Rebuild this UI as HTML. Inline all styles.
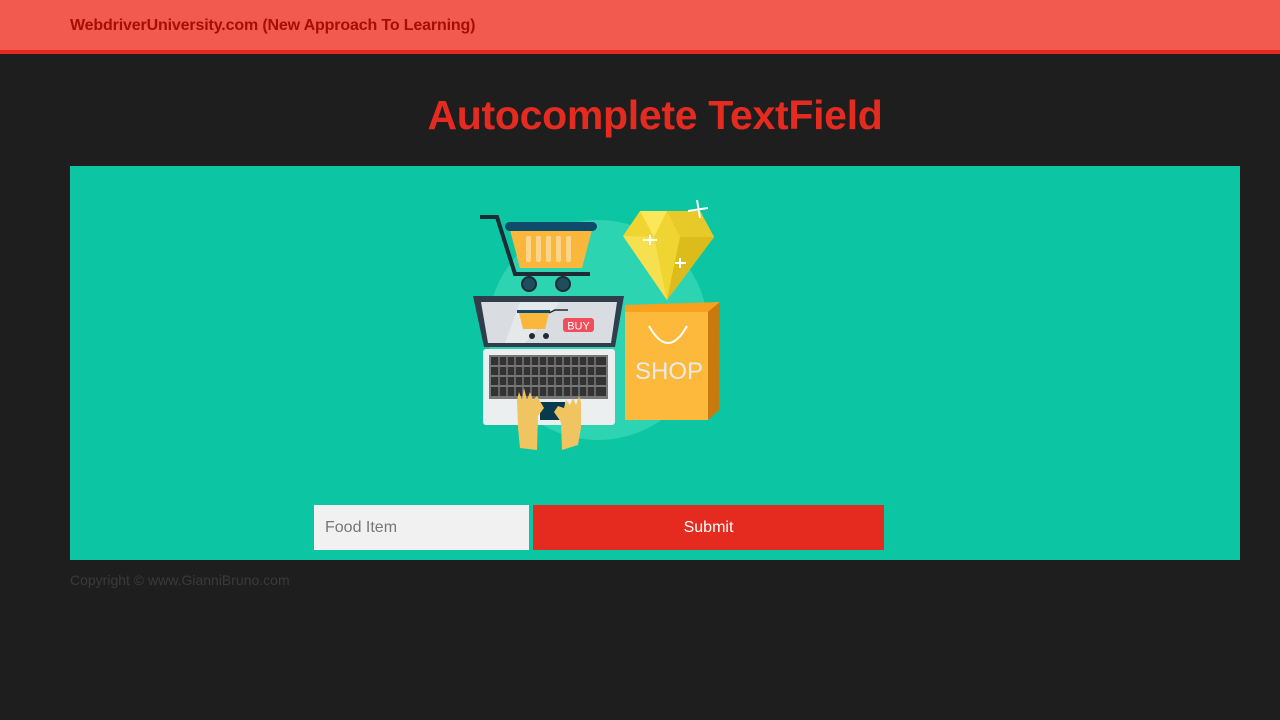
<!DOCTYPE html>
<html><head><meta charset="utf-8"><style>
*{margin:0;padding:0;box-sizing:border-box}
body{width:1280px;height:720px;background:#1e1e1e;font-family:"Liberation Sans",Helvetica,Arial,sans-serif;position:relative;overflow:hidden}
.hdr{position:absolute;left:0;top:0;width:1280px;height:54px;background:#f25a4f;border-bottom:4px solid #e52b20}
.hdr span{position:absolute;left:70px;top:17px;font-size:16px;font-weight:bold;color:#a50e06;letter-spacing:-0.15px}
h1{position:absolute;left:70px;width:1170px;top:90px;text-align:center;font-size:41px;font-weight:bold;color:#e52b20;line-height:50px;letter-spacing:-0.3px}
.box{position:absolute;left:70px;top:166px;width:1170px;height:394px;background:#0cc6a3}
.inp{position:absolute;left:314px;top:505px;width:215px;height:45px;background:#f1f1f1;color:#777;font-size:16px;line-height:45px;padding-left:11px}
.btn{position:absolute;left:533px;top:505px;width:351px;height:45px;background:#e52b20;color:#fff;font-size:16px;line-height:45px;text-align:center}
.cp{position:absolute;left:70px;top:572px;font-size:14px;color:#3a3a3a}
svg{position:absolute;left:0;top:0}
</style></head><body>
<div class="hdr"><span>WebdriverUniversity.com (New Approach To Learning)</span></div>
<h1>Autocomplete TextField</h1>
<div class="box"></div>
<svg width="1280" height="720">
<circle cx="598" cy="330" r="110" fill="#2dd4b2"/>
<polyline points="480,217 497,217 515,274 590,274" fill="none" stroke="#1d2b36" stroke-width="4"/>
<polygon points="510,230 592,230 582,268 520,268" fill="#fbb73c"/>
<g fill="#fdd58a"><rect x="526" y="236" width="5" height="26" rx="2"/><rect x="536" y="236" width="5" height="26" rx="2"/><rect x="546" y="236" width="5" height="26" rx="2"/><rect x="556" y="236" width="5" height="26" rx="2"/><rect x="566" y="236" width="5" height="26" rx="2"/></g>
<rect x="505" y="222" width="92" height="9" rx="4.5" fill="#0e4b6d"/>
<circle cx="529" cy="284" r="7" fill="#1e4e5e" stroke="#1d2b36" stroke-width="2"/>
<circle cx="563" cy="284" r="7" fill="#1e4e5e" stroke="#1d2b36" stroke-width="2"/>
<polygon points="623,236 640,211 700,211 714,237 667,300" fill="#f0d431"/>
<polygon points="640,211 667,211 654,237" fill="#fbe85a"/>
<polygon points="623,236 654,237 667,300" fill="#f7e050"/>
<polygon points="680,237 714,237 667,300" fill="#dcbc1c"/>
<polygon points="667,211 700,211 714,237 680,237" fill="#e8c92a"/>
<path d="M697 200 L700 218 M688 211 L708 208 M650 235 L650 245 M643 240 L657 240 M680 258 L680 268 M675 263 L686 263" stroke="#fff" stroke-width="2"/>
<polygon points="473,296 624,296 615,347 484,347" fill="#2f3d4d"/>
<polygon points="481,302 617,302 611,343 488,343" fill="#d9dde2"/>
<polygon points="520,302 560,302 525,343 505,343" fill="#e6e9ec"/>
<rect x="517" y="310" width="33" height="3" fill="#0e4b6d"/>
<polygon points="519,313 549,313 545,329 523,329" fill="#fbb73c"/>
<polyline points="549,313 555,310 568,310" fill="none" stroke="#1d2b36" stroke-width="1.5"/>
<circle cx="532" cy="336" r="3" fill="#1d2b36"/><circle cx="546" cy="336" r="3" fill="#1d2b36"/>
<rect x="563" y="318" width="31" height="14" rx="3" fill="#f24d5b"/>
<text x="578.5" y="329.5" text-anchor="middle" font-size="11" fill="#fff" font-family="Liberation Sans,sans-serif">BUY</text>
<rect x="483" y="349" width="132" height="76" rx="3" fill="#eceff0"/>
<rect x="489" y="355" width="119" height="44" fill="#777"/>
<g fill="#333">
<rect x="491" y="357" width="115" height="8"/><rect x="491" y="367" width="115" height="8"/><rect x="491" y="377" width="115" height="8"/><rect x="491" y="387" width="115" height="9"/>
</g>
<g stroke="#777" stroke-width="1.5">
<path d="M499 357v39M507 357v39M515 357v39M523 357v39M531 357v39M539 357v39M547 357v39M555 357v39M563 357v39M571 357v39M579 357v39M587 357v39M595 357v39"/>
</g>
<rect x="540" y="402" width="25" height="18" fill="#073a4e"/>
<path d="M517 400 L519 392 L522 400 L524 388 L527 400 L530 392 L533 400 L537 396 L544 408 L538 416 L537 450 L520 448 L518 428 Z" fill="#f0c460"/>
<path d="M581 402 L579 396 L576 405 L573 398 L570 405 L566 400 L564 408 L558 406 L554 412 L561 422 L562 450 L578 445 L581 428 Z" fill="#f0c460"/>
<polygon points="625,305 720,302 708,312 625,312" fill="#f7a11d"/>
<polygon points="708,312 720,302 719,410 708,420" fill="#c97a0c"/>
<rect x="625" y="312" width="83" height="108" fill="#fdb93c"/>
<path d="M649 326 Q668 360 687 326" fill="none" stroke="#fff" stroke-width="2"/>
<text x="669" y="379" text-anchor="middle" font-size="24" fill="#eaeaea" font-family="Liberation Sans,sans-serif">SHOP</text>
</svg>
<div class="inp">Food Item</div>
<div class="btn">Submit</div>
<div class="cp">Copyright © www.GianniBruno.com</div>
</body></html>
